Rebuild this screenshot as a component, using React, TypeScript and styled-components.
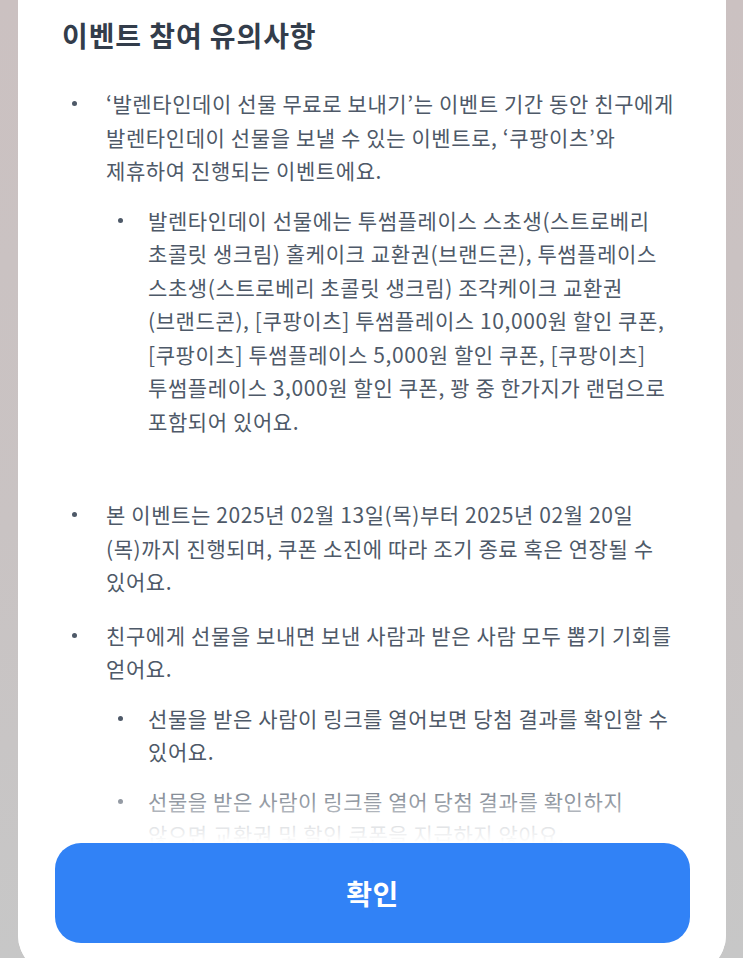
import React from 'react';
import styled, { createGlobalStyle } from 'styled-components';

const GlobalStyle = createGlobalStyle`
  html, body {
    margin: 0;
    padding: 0;
  }
  body {
    font-family: 'Noto Sans CJK KR', 'Noto Sans', sans-serif;
    -webkit-font-smoothing: antialiased;
  }
  * {
    box-sizing: border-box;
  }
`;

const Screen = styled.div`
  height: 958px;
  overflow: hidden;
  padding: 0 17px 0 18px;
  background: linear-gradient(180deg, #cbc1c1 0%, #c9c3c3 55%, #c7c7c7 100%);
`;

const Sheet = styled.div`
  display: flex;
  flex-direction: column;
  height: 975px;
  background: #fff;
  border-radius: 0 0 40px 40px;
  overflow: hidden;
`;

const Body = styled.div`
  flex: 1 1 auto;
  min-height: 0;
  overflow: hidden;
  padding: 17px 44px 0 44px;
`;

const Title = styled.h2`
  margin: 0;
  font-size: 28px;
  line-height: 36px;
  font-weight: 700;
  color: #333d4b;
  letter-spacing: 0.9px;
`;

const List = styled.ul<{ $top: number; $bottom?: number }>`
  list-style: none;
  margin: ${(p) => p.$top}px 0 ${(p) => p.$bottom ?? 0}px;
  padding: 0;
  display: flex;
  flex-direction: column;
  gap: ${(p) => (p.$bottom !== undefined ? 16 : 20)}px;
`;

const Item = styled.li<{ $nested?: boolean }>`
  display: grid;
  grid-template-columns: ${(p) => (p.$nested ? 42 : 44)}px 1fr;
  font-size: 21px;
  line-height: 33.5px;
  letter-spacing: 0.6px;
  color: #4e5968;
  word-break: keep-all;
`;

const Dot = styled.span<{ $nested?: boolean }>`
  display: flex;
  align-items: center;
  height: 33.5px;
  padding-left: ${(p) => (p.$nested ? 12 : 10)}px;
  &::before {
    content: '';
    width: 5px;
    height: 5px;
    border-radius: 50%;
    background: #4e5968;
  }
`;

const Text = styled.div`
  min-width: 0;
`;

// fade over the list where it runs under the button
const Footer = styled.div`
  position: relative;
  flex: none;
  padding: 0 36px 32px 37px;
  background: #fff;
  &::before {
    content: '';
    position: absolute;
    left: 0;
    right: 0;
    bottom: 100%;
    height: 60px;
    background: linear-gradient(
      180deg,
      rgba(255, 255, 255, 0.2) 0%,
      rgba(255, 255, 255, 0.42) 35%,
      rgba(255, 255, 255, 0.85) 75%,
      #fff 100%
    );
  }
`;

const ConfirmButton = styled.button`
  display: block;
  width: 100%;
  height: 100px;
  border: none;
  border-radius: 26px;
  background: #3182f6;
  color: #fff;
  font-family: inherit;
  font-size: 28px;
  font-weight: 700;
  letter-spacing: 0.5px;
  cursor: pointer;
`;

const notes: { text: string; subs?: string[]; gapAfter?: number }[] = [
  {
    text: '‘발렌타인데이 선물 무료로 보내기’는 이벤트 기간 동안 친구에게 발렌타인데이 선물을 보낼 수 있는 이벤트로, ‘쿠팡이츠’와 제휴하여 진행되는 이벤트에요.',
    subs: [
      '발렌타인데이 선물에는 투썸플레이스 스초생(스트로베리 초콜릿 생크림) 홀케이크 교환권(브랜드콘), 투썸플레이스 스초생(스트로베리 초콜릿 생크림) 조각케이크 교환권\u200B(브랜드콘), [쿠팡이츠] 투썸플레이스 10,000원 할인 쿠폰, [쿠팡이츠] 투썸플레이스 5,000원 할인 쿠폰, [쿠팡이츠] 투썸플레이스 3,000원 할인 쿠폰, 꽝 중 한가지가 랜덤으로 포함되어 있어요.',
    ],
    gapAfter: 40,
  },
  {
    text: '본 이벤트는 2025년 02월 13일(목)부터 2025년 02월 20일\u200B(목)\u2060까지 진행되며, 쿠폰 소진에 따라 조기 종료 혹은 연장될 수 있어요.',
  },
  {
    text: '친구에게 선물을 보내면 보낸 사람과 받은 사람 모두 뽑기 기회를 얻어요.',
    subs: [
      '선물을 받은 사람이 링크를 열어보면 당첨 결과를 확인할 수 있어요.',
      '선물을 받은 사람이 링크를 열어 당첨 결과를 확인하지 않으면 교환권 및 할인 쿠폰을 지급하지 않아요.',
    ],
    gapAfter: 0,
  },
];

export default function App() {
  return (
    <>
      <GlobalStyle />
      <Screen>
        <Sheet>
          <Body>
            <Title>이벤트 참여 유의사항</Title>
            <List $top={34}>
              {notes.map((note) => (
                <Item key={note.text}>
                  <Dot />
                  <Text>
                    {note.text}
                    {note.subs && (
                      <List $top={16} $bottom={note.gapAfter}>
                        {note.subs.map((sub) => (
                          <Item key={sub} $nested>
                            <Dot $nested />
                            <Text>{sub}</Text>
                          </Item>
                        ))}
                      </List>
                    )}
                  </Text>
                </Item>
              ))}
            </List>
          </Body>
          <Footer>
            <ConfirmButton>확인</ConfirmButton>
          </Footer>
        </Sheet>
      </Screen>
    </>
  );
}
